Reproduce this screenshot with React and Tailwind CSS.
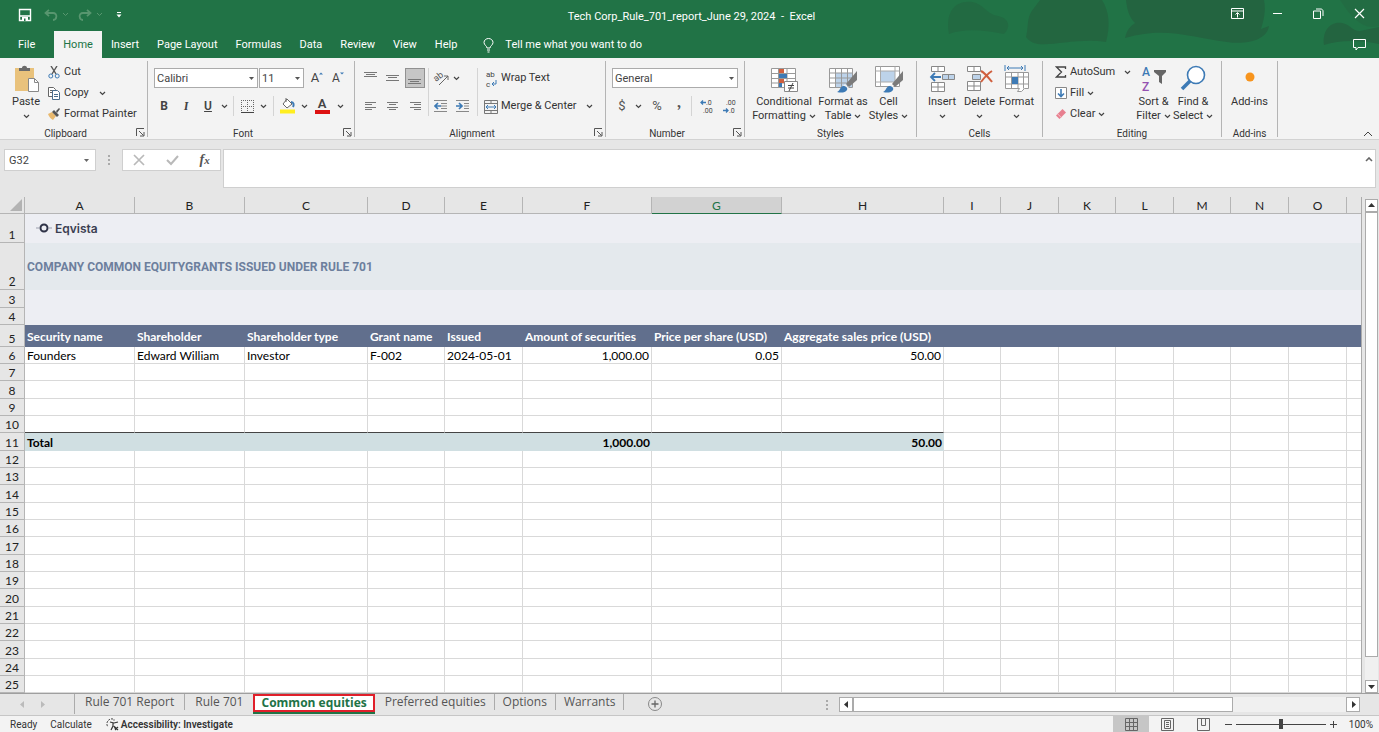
import clsx from "clsx";

const MENU_TABS = ['Insert', 'Page Layout', 'Formulas', 'Data', 'Review', 'View', 'Help'];

const COLUMNS = [
  { name: 'A', width: 'w-[110px]' },
  { name: 'B', width: 'w-[110px]' },
  { name: 'C', width: 'w-[123px]' },
  { name: 'D', width: 'w-[77px]' },
  { name: 'E', width: 'w-[78px]' },
  { name: 'F', width: 'w-[129px]' },
  { name: 'G', width: 'w-[130px]' },
  { name: 'H', width: 'w-[162px]' },
  { name: 'I', width: 'w-[57px]' },
  { name: 'J', width: 'w-[58px]' },
  { name: 'K', width: 'w-[57px]' },
  { name: 'L', width: 'w-[58px]' },
  { name: 'M', width: 'w-[57px]' },
  { name: 'N', width: 'w-[58px]' },
  { name: 'O', width: 'w-[58px]' },
  { name: '', width: '' },
];

const HEADINGS = ['Security name', 'Shareholder', 'Shareholder type', 'Grant name', 'Issued', 'Amount of securities', 'Price per share (USD)', 'Aggregate sales price (USD)'];
const GRANT = ['Founders', 'Edward William', 'Investor', 'F-002', '2024-05-01', '1,000.00', '0.05', '50.00'];
const TOTAL = ['Total', '', '', '', '', '1,000.00', '', '50.00'];

const Icon = ({ w = 16, h = 16, children, className }) => (
  <svg width={w} height={h} viewBox={`0 0 ${w} ${h}`} fill="none" stroke="#666" className={clsx('shrink-0', className)} aria-hidden="true">
    {children}
  </svg>
);

const Chevron = ({ className }) => (
  <Icon w={7} h={5} className={className}><path d="M1 1l2.5 2.5L6 1" stroke="#444" strokeWidth="1.2" /></Icon>
);

const Sep = () => <span className="w-px h-5 bg-[#d4d4d4] shrink-0" />;

const Tool = ({ label, className, children }) => (
  <button type="button" aria-label={label} className={clsx('flex h-5 items-center justify-center shrink-0', className)}>{children}</button>
);

const Group = ({ title, launcher, className, children }) => (
  <section aria-label={title} className={clsx('relative flex flex-col h-[76px] shrink-0 border-r border-[#b4b4b4]', className)}>
    <div className="h-16 shrink-0">{children}</div>
    <div className={clsx('text-center leading-[18px] text-[10px] text-[#333]', launcher && 'pr-4')}>{title}</div>
    {launcher && (
      <button type="button" aria-label={`${title} settings`} className="absolute right-[2px] bottom-0">
        <Icon w={9} h={9}><path d="M.5 8V.5H8M3 3l4.500 4.500M8 4v4H4" stroke="#555" /></Icon>
      </button>
    )}
  </section>
);

const BigButton = ({ icon, lines, chevron, className }) => (
  <button type="button" className={clsx('flex flex-col items-center pt-1 shrink-0 text-[11px] leading-[14px] whitespace-nowrap', className)}>
    <span className="flex h-[30px] items-start justify-center">{icon}</span>
    {lines.map((line, i) => (
      <span key={line} className="flex items-center gap-[3px]">
        {line}
        {chevron && i === 1 && <Chevron />}
      </span>
    ))}
    {chevron && lines.length === 1 && <span className="flex h-[14px] items-center"><Chevron /></span>}
  </button>
);

const Lines = ({ rows }) => (
  <Icon w={14} h={14}>
    {rows.map(([x, w, y]) => <path key={y} d={`M${x} ${y}.5h${w}`} stroke="#777" />)}
  </Icon>
);

const Brush = ({ x, y }) => (
  <g transform={`translate(${x} ${y})`} stroke="none">
    <path d="M20-2v9l-8 7-3-3z" fill="#7b7b7b" />
    <path d="M8 11l4 4-1 2-5-4z" fill="#f3f3f3" />
    <path d="M6 13c3 0 5 2 4 4-2 3-6 3-10 2 3-1 3-5 6-6z" fill="#3d7ab5" />
  </g>
);

const TitleArt = () => (
  <svg width="479" height="58" viewBox="0 0 479 58" className="absolute right-0 top-0" aria-hidden="true">
    <g fill="#236440">
      <path d="M49 34C45 12 55 0 72 2c12 2 14 12 26 14 10 2 14 10 6 18-20-4-40-6-55 0z" opacity=".6" />
      <path d="M126 37c3-12 0-20 8-29l6-8h62c8 12 8 28 4 42-26-4-52 4-68 2-6-1-10-4-12-7z" opacity=".85" />
      <path d="M226 0h138c2 10 0 20-3 29l8-3c-2 14-22 19-42 16-36-4-60-16-102-4 2-9 6-12 10-15-6-6-8-14-9-23z" />
      <path d="M424 45c-2-14 6-24 18-22 8 1 10 8 18 8l19-4v17c-18-4-40-4-55 1z" />
      <path d="M440 0h39v26c-16 4-26-6-39-26z" opacity=".45" />
    </g>
  </svg>
);

const TitleBar = () => (
  <header className="relative bg-[#217346] text-white text-[11px]">
    <TitleArt />
    <div className="relative flex h-[31px] items-center">
      <div className="flex flex-1 items-center pl-[18px] pb-[2px] gap-[7px]">
        <button type="button" aria-label="Save">
          <Icon w={14} h={14}><path d="M1.500 1.500h11v11h-11zM2 8h10" stroke="#fff" strokeWidth="1.400" /><path d="M4 9h6v4H4z" fill="#fff" stroke="none" /><path d="M6 10.500h1.500V13H6z" fill="#217346" stroke="none" /></Icon>
        </button>
        <button type="button" aria-label="Undo" className="flex items-center gap-1 ml-[5px]">
          <Icon w={14} h={12}><path d="M5 .8L1.500 4 5 7.200M2 4h7c5 0 4 7 0 7" stroke="#58966f" strokeWidth="1.800" /></Icon>
          <Icon w={7} h={5}><path d="M1 1l2.500 2.500L6 1" stroke="#58966f" /></Icon>
        </button>
        <button type="button" aria-label="Redo" className="flex items-center gap-1 ml-[2px]">
          <Icon w={14} h={12}><path d="M9 .8L12.500 4 9 7.200M12 4H5C0 4 1 11 5 11" stroke="#58966f" strokeWidth="1.800" /></Icon>
          <Icon w={7} h={5}><path d="M1 1l2.500 2.500L6 1" stroke="#58966f" /></Icon>
        </button>
        <button type="button" aria-label="Customize toolbar" className="ml-[6px]">
          <Icon w={6} h={6}><path d="M1 .5h4" stroke="#fff" /><path d="M.5 2.500h5L3 5.500z" fill="#fff" stroke="none" /></Icon>
        </button>
      </div>
      <h1 className="pt-[3px] whitespace-pre">Tech Corp_Rule_701_report_June 29, 2024  -  Excel</h1>
      <div className="flex flex-1 items-center justify-end gap-[28px] pr-[14px] pb-1">
        <button type="button" aria-label="Ribbon display options">
          <Icon w={13} h={11}><path d="M.5.5h12v10H.5zM.5 3h12M6.500 9.500V5M4.500 6.500l2-2 2 2" stroke="#fff" /></Icon>
        </button>
        <button type="button" aria-label="Minimize"><Icon w={11} h={11}><path d="M1 5.500h9" stroke="#fff" /></Icon></button>
        <button type="button" aria-label="Restore" className="ml-[2px]">
          <Icon w={11} h={11}><path d="M.5 3h7v7.500h-7zM3 1h5c1 0 2 1 2 2v5" stroke="#fff" /></Icon>
        </button>
        <button type="button" aria-label="Close" className="ml-[2px]"><Icon w={11} h={11}><path d="M1 1l9 9M10 1l-9 9" stroke="#fff" strokeWidth="1.200" /></Icon></button>
      </div>
    </div>
    <nav className="relative flex h-[27px] items-stretch pl-[9px]">
      <button type="button" className="px-[9px] pt-[2px] mr-[10px]">File</button>
      <button type="button" className="px-[9px] pt-[2px] bg-[#f3f3f3] text-[#217346]">Home</button>
      {MENU_TABS.map(tab => <button type="button" key={tab} className="px-[9px] pt-[2px]">{tab}</button>)}
      <button type="button" className="flex items-center gap-[10px] pt-px ml-[17px]">
        <Icon w={12} h={15}><path d="M4 10c0-2-3-3-3-5.500a4.500 4 0 0 1 9 0C10 7 7 8 7 10zM4 12h3M4.500 14h2" stroke="#fff" /></Icon>
        Tell me what you want to do
      </button>
      <button type="button" aria-label="Comments" className="ml-auto mr-[13px]">
        <Icon w={13} h={12}><path d="M.5.500h12v8H5L3 11V8.500H.5z" stroke="#fff" /></Icon>
      </button>
    </nav>
  </header>
);

const ClipboardGroup = () => (
  <Group title="Clipboard" launcher className="w-[148px]">
    <div className="flex pl-3 gap-2">
      <button type="button" className="flex flex-col items-center w-7 pt-1 text-[11px] leading-[14px]">
        <Icon w={26} h={30}>
          <path d="M2 3h19v23H2z" fill="#e9c27c" stroke="none" />
          <path d="M6 6V3h3c0-3 5-3 5 0h3v3z" fill="#6b6b6b" stroke="none" />
          <path d="M15.500 13.500h6l4 4v9h-10z" fill="#fff" stroke="#888" /><path d="M21.500 13.500v4h4" stroke="#888" />
        </Icon>
        Paste
        <span className="flex h-[14px] items-center"><Chevron /></span>
      </button>
      <div className="flex flex-col text-[11px]">
        <button type="button" className="flex h-[21px] items-center gap-1 pt-px">
          <Icon w={12} h={13}><path d="M3 0l5 8M9 0L4 8" stroke="#555" strokeWidth="1.400" /><circle cx="2.800" cy="10" r="2" stroke="#3d7ab5" /><circle cx="9.200" cy="10" r="2" stroke="#3d7ab5" /></Icon>
          Cut
        </button>
        <button type="button" className="flex h-[21px] items-center gap-1 pt-px">
          <Icon w={12} h={13}><path d="M.5.500h5l2 2v7h-7zM2 3.500h3M2 5.500h3" fill="#fff" /><path d="M4.500 3.500h5l2 2v7h-7zM6 7.500h4M6 9.500h4" fill="#fff" stroke="#4a6d8c" /></Icon>
          Copy
          <Chevron className="ml-[6px]" />
        </button>
        <button type="button" className="flex h-[21px] items-center gap-1 pt-px whitespace-nowrap">
          <Icon w={12} h={12}><path d="M0 6l4-2 4 4-3 4C3 11 1 9 0 6z" fill="#e9b96e" stroke="none" /><path d="M4 4l2-2 5 5-2 2zM8 3l3-3 1 1-3 4z" fill="#555" stroke="none" /></Icon>
          Format Painter
        </button>
      </div>
    </div>
  </Group>
);

const Dropdown = ({ label, value, className }) => (
  <div className={clsx('relative h-5', className)}>
    <select aria-label={label} className="block w-full h-full appearance-none border border-[#ababab] bg-white pl-[2px] text-[11px] leading-none text-[#444]">
      <option>{value}</option>
    </select>
    <Icon w={5} h={3} className="absolute right-1 top-[9px] pointer-events-none"><path d="M0 0h5L2.500 3z" fill="#555" stroke="none" /></Icon>
  </div>
);

const FontGroup = () => (
  <Group title="Font" launcher className="w-[207px]">
    <div className="flex flex-col gap-2 pt-[7px] pl-[6px]">
      <div className="flex items-center">
        <Dropdown label="Font" value="Calibri" className="w-[104px] mr-px" />
        <Dropdown label="Font size" value="11" className="w-[45px] mr-[3px]" />
        <Tool label="Grow font" className="w-5 text-[13px] text-[#444]">A<Icon w={4} h={12}><path d="M0 2.500L2 .5l2 2z" fill="#3d7ab5" stroke="none" /></Icon></Tool>
        <Tool label="Shrink font" className="w-[22px] text-[12px] text-[#444]">A<Icon w={4} h={12}><path d="M0 .5h4l-2 2z" fill="#3d7ab5" stroke="none" /></Icon></Tool>
      </div>
      <div className="flex items-center text-[12px] text-[#444]">
        <Tool className="w-5 font-bold">B</Tool>
        <Tool className="w-6 italic font-serif font-bold">I</Tool>
        <Tool className="w-5 underline font-semibold">U</Tool>
        <Tool label="Underline styles" className="w-3"><Chevron /></Tool>
        <span className="w-[3px]" /><Sep /><span className="w-[3px]" />
        <Tool label="Borders" className="w-5"><Icon w={13} h={13}><path d="M.5 0v12M6.500 0v12M12.500 0v12M0 .5h13M0 6.500h13" strokeDasharray="1 1" /><path d="M0 12.500h13" stroke="#444" /></Icon></Tool>
        <Tool label="Border styles" className="w-3"><Chevron /></Tool>
        <span className="w-[4px]" /><Sep /><span className="w-[4px]" />
        <Tool label="Fill color" className="w-5">
          <Icon w={16} h={16}><path d="M7 1l5 5-5 4-4-4zM6 4V0" stroke="#666" fill="#fff" /><path d="M11 4c3 0 3 3 2 5" stroke="#3d7ab5" strokeWidth="2" /><path d="M0 11.500h15v4H0z" fill="#ffee1f" stroke="none" /></Icon>
        </Tool>
        <Tool label="Fill colors" className="w-3"><Chevron /></Tool>
        <Tool label="Font color" className="w-6">
          <span className="flex flex-col items-center"><span className="leading-[12px] text-[13px] font-semibold">A</span><span className="w-[15px] h-1 bg-[#dd1111]" /></span>
        </Tool>
        <Tool label="Font colors" className="w-3"><Chevron /></Tool>
      </div>
    </div>
  </Group>
);

const AlignmentGroup = () => (
  <Group title="Alignment" launcher className="w-[251px]">
    <div className="flex pt-[7px] pl-[6px]">
      <div className="grid grid-cols-3 gap-x-[2px] gap-y-2 pr-[3px] shrink-0">
        <Tool label="Top align" className="w-5"><Lines rows={[[0, 13, 1], [2, 9, 3], [0, 13, 5]]} /></Tool>
        <Tool label="Middle align" className="w-5"><Lines rows={[[0, 13, 4], [2, 9, 6], [0, 13, 9]]} /></Tool>
        <Tool label="Bottom align" className="w-5 border border-[#919191] bg-[#c6c6c6]"><Lines rows={[[0, 13, 8], [2, 9, 10], [0, 13, 12]]} /></Tool>
        <Tool label="Align left" className="w-5"><Lines rows={[[1, 11, 3], [1, 7, 5], [1, 11, 8], [1, 7, 10]]} /></Tool>
        <Tool label="Center" className="w-5"><Lines rows={[[1, 11, 3], [3, 7, 5], [1, 11, 8], [3, 7, 10]]} /></Tool>
        <Tool label="Align right" className="w-5"><Lines rows={[[2, 11, 3], [6, 7, 5], [2, 11, 8], [6, 7, 10]]} /></Tool>
      </div>
      <div className="flex flex-col gap-2 w-[50px] shrink-0 border-x border-[#d4d4d4] pl-[2px]">
        <div className="flex items-center gap-[2px]">
          <Tool label="Orientation" className="w-5">
            <svg width="16" height="16" viewBox="0 0 16 16" className="overflow-visible" aria-hidden="true"><text x="1" y="10" fontSize="9" fill="#555" transform="rotate(-38 5 8)">ab</text><path d="M6 15l9-9M11 6h4v4" stroke="#666" fill="none" /></svg>
          </Tool>
          <Chevron />
        </div>
        <div className="flex items-center gap-[2px]">
          <Tool label="Decrease indent" className="w-5"><Icon w={14} h={12}><path d="M0 .5h13M7 3.500h6M7 6h6M7 8.500h6M0 11.500h13" stroke="#888" /><path d="M7 6H1M4 3L1 6l3 3" stroke="#3d7ab5" strokeWidth="1.700" /></Icon></Tool>
          <Tool label="Increase indent" className="w-5"><Icon w={14} h={12}><path d="M0 .5h13M8 3.500h5M8 6h5M8 8.500h5M0 11.500h13" stroke="#888" /><path d="M0 6h6M3 3l3 3-3 3" stroke="#3d7ab5" strokeWidth="1.700" /></Icon></Tool>
        </div>
      </div>
      <div className="flex flex-col gap-2 pl-[6px] text-[11px] whitespace-nowrap">
        <button type="button" className="flex h-5 items-center gap-[3px] pt-px">
          <svg width="14" height="18" viewBox="0 0 14 18" className="overflow-visible" aria-hidden="true"><text x="2" y="7" fontSize="8" fill="#444">ab</text><text x="2" y="17" fontSize="8" fill="#444">c</text><path d="M12 10v4H8M10 12l-2 2 2 2" stroke="#3d7ab5" fill="none" /></svg>
          Wrap Text
        </button>
        <button type="button" className="flex h-5 items-center gap-[3px] pt-px">
          <Icon w={14} h={14}><path d="M.5.500h13v13H.5zM.5 3.500h13M.5 10.500h13M7 0v3.500M7 10.500V14" stroke="#777" /><path d="M2 7h10M4 5L2 7l2 2M10 5l2 2-2 2" stroke="#3d7ab5" /></Icon>
          Merge &amp; Center
          <Chevron className="ml-[6px]" />
        </button>
      </div>
    </div>
  </Group>
);

const DecimalIcon = ({ increase }) => (
  <svg width="14" height="14" viewBox="0 0 14 14" className="overflow-visible" aria-hidden="true" fontSize="7" fill="#444">
    <text x={increase ? 6 : 4} y="6">{increase ? '.0' : '.00'}</text>
    <text x={increase ? 3 : 7} y="14">{increase ? '.00' : '.0'}</text>
    <path d={increase ? 'M6 3.500H1M3 1.500l-2 2 2 2' : 'M1 11.500h5M4 9.500l2 2-2 2'} stroke="#3d7ab5" strokeWidth="1.300" fill="none" />
  </svg>
);

const NumberGroup = () => (
  <Group title="Number" launcher className="w-[139px]">
    <div className="flex flex-col gap-2 pt-[7px] pl-[6px]">
      <Dropdown label="Number format" value="General" className="w-[126px]" />
      <div className="flex items-center text-[13px] text-[#555]">
        <Tool className="w-5">$</Tool>
        <Tool label="Currency formats" className="w-3"><Chevron /></Tool>
        <Tool className="w-[26px]">%</Tool>
        <Tool className="w-[18px] pb-2 font-bold font-serif text-[18px]">,</Tool>
        <span className="w-[3px] shrink-0" /><Sep /><span className="w-[4px] shrink-0" />
        <Tool label="Increase decimal" className="w-[22px]"><DecimalIcon increase /></Tool>
        <Tool label="Decrease decimal" className="w-[22px]"><DecimalIcon /></Tool>
      </div>
    </div>
  </Group>
);

const StylesGroup = () => (
  <Group title="Styles" className="w-[172px]">
    <div className="flex pl-[6px]">
      <BigButton className="w-[66px]" chevron lines={['Conditional', 'Formatting']} icon={
        <Icon w={28} h={28}>
          <path d="M1.500 3.500h24v19h-24zM1.500 8.500h24M1.500 13.500h24M1.500 18h24M8.500 3.500v19M17 3.500v19" fill="#fff" stroke="#999" />
          <path d="M9 4h5v4H9zM9 14h5v4H9z" fill="#d0603f" stroke="none" /><path d="M9 9h8v4H9zM9 18h3v4H9z" fill="#3d7ab5" stroke="none" />
          <path d="M14.500 16.500h13v10h-13z" fill="#fff" stroke="#888" /><path d="M18 20.500h6M18 23h6M23 18l-4 8" stroke="#444" />
        </Icon>
      } />
      <BigButton className="w-[52px]" chevron lines={['Format as', 'Table']} icon={
        <Icon w={28} h={28}>
          <path d="M.5 3.500h23v19H.5z" fill="#fff" stroke="#999" /><path d="M7 8h16v14H7z" fill="#bdd3ea" stroke="none" />
          <path d="M.5 8h23M.5 13h23M.5 18h23M6.500 3.500v19M12.500 3.500v19M18.500 3.500v19" stroke="#999" />
          <Brush x={8} y={8} />
        </Icon>
      } />
      <BigButton className="w-[39px]" chevron lines={['Cell', 'Styles']} icon={
        <Icon w={28} h={28}>
          <path d="M.5 1.500h24v20H.5z" fill="#fff" stroke="#999" /><path d="M6 6h14v11H6z" fill="#bdd3ea" stroke="none" />
          <path d="M.5 6h24M.5 17h24M5.500 1.500v20M20 1.500v20" stroke="#aaa" />
          <Brush x={8} y={8} />
        </Icon>
      } />
    </div>
  </Group>
);

const CellsGroup = () => (
  <Group title="Cells" className="w-[126px]">
    <div className="flex pl-[6px]">
      <BigButton className="w-[38px]" chevron lines={['Insert']} icon={
        <Icon w={26} h={28}>
          <path d="M2.500 1.500h13v5h-13zM9 1.500v5M2.500 17.500h13v9h-13zM2.500 22h13M9 17.500v9" fill="#fff" stroke="#888" />
          <path d="M13.500 9.500h12v5h-12zM19.500 9.500v5" fill="#bdd3ea" stroke="#888" /><path d="M12 12H2M6 8l-4 4 4 4" stroke="#3d7ab5" strokeWidth="1.800" />
        </Icon>
      } />
      <BigButton className="w-[37px]" chevron lines={['Delete']} icon={
        <Icon w={26} h={28}>
          <path d="M.5 1.500h13v5H.5zM7 1.500v5M.5 16.500h13v9H.5zM.5 21h13M7 16.500v9" fill="#fff" stroke="#888" />
          <path d="M5.500 9.500h8v5h-8z" fill="#bdd3ea" stroke="#888" /><path d="M14 6c4 2 7 6 11 11M25 6c-5 3-8 7-11 11" stroke="#d0603f" strokeWidth="2" />
        </Icon>
      } />
      <BigButton className="w-[37px]" chevron lines={['Format']} icon={
        <Icon w={26} h={28}>
          <path d="M1 0v6M21 0v6M3 3h16M5 1L3 3l2 2M17 1l2 2-2 2" stroke="#3d7ab5" />
          <path d="M1.500 7.500h23v16h-4l-3 3h-4l2-3h-14zM1.500 12h23M1.500 19h23M7.500 7.500v16M14 7.500v16M19.500 7.500v16" fill="#fff" stroke="#999" />
          <path d="M8 12h6v7H8z" fill="#3d7ab5" stroke="none" />
        </Icon>
      } />
    </div>
  </Group>
);

const EditingGroup = () => (
  <Group title="Editing" className="w-[179px]">
    <div className="flex pl-3">
      <div className="flex flex-col w-[79px] text-[11px]">
        <button type="button" className="flex h-[21px] items-center gap-[3px] pt-px">
          <Icon w={12} h={12}><path d="M10.500 3V1H1.500l5 5-5 5h9V9" stroke="#444" strokeWidth="1.300" /></Icon>
          AutoSum
          <Chevron className="ml-[6px]" />
        </button>
        <button type="button" className="flex h-[21px] items-center gap-[3px] pt-px">
          <Icon w={12} h={12}><path d="M.5.500h11v11H.5z" fill="#fff" stroke="#888" /><path d="M6 2v7M3 6.500l3 3 3-3" stroke="#3d7ab5" strokeWidth="1.600" /></Icon>
          Fill
          <Chevron />
        </button>
        <button type="button" className="flex h-[21px] items-center gap-[3px] pt-px">
          <Icon w={12} h={12}><path d="M7.500 1L11 4.500 4.500 11 1 7.500z" fill="#e77f8f" stroke="none" /><path d="M2.500 5.800l3.800 3.800" stroke="#f7c5cc" /></Icon>
          Clear
          <Chevron />
        </button>
      </div>
      <BigButton className="w-[39px]" chevron lines={['Sort &', 'Filter']} icon={
        <svg width="26" height="28" viewBox="0 0 26 28" className="overflow-visible" aria-hidden="true" fontSize="12" fontWeight="500"><text x="1" y="11" fill="#3d7ab5">A</text><text x="1" y="26" fill="#9351b0">Z</text><path d="M13 5h12v2l-4 4v8l-3-2v-6l-5-4z" fill="#666" /></svg>
      } />
      <BigButton className="w-[40px]" chevron lines={['Find &', 'Select']} icon={
        <Icon w={26} h={28}><circle cx="16" cy="10" r="8.500" fill="#fff" stroke="#3d7ab5" strokeWidth="1.600" /><path d="M10 16l-8 8" stroke="#3d7ab5" strokeWidth="3.500" /></Icon>
      } />
    </div>
  </Group>
);

const Ribbon = () => (
  <div className="flex h-[82px] pt-[3px] bg-[#f3f3f3] border-b border-[#d2d2d2] text-[#333]">
    <ClipboardGroup />
    <FontGroup />
    <AlignmentGroup />
    <NumberGroup />
    <StylesGroup />
    <CellsGroup />
    <EditingGroup />
    <Group title="Add-ins" className="w-[56px]">
      <BigButton className="w-full" lines={['Add-ins']} icon={<Icon w={12} h={26}><circle cx="6" cy="12" r="4.500" fill="#f7941d" stroke="none" /></Icon>} />
    </Group>
    <button type="button" aria-label="Collapse ribbon" className="self-end ml-auto mr-[6px] mb-[2px]">
      <Icon w={10} h={6}><path d="M1 5l4-4 4 4" stroke="#444" /></Icon>
    </button>
  </div>
);

const FormulaBar = () => (
  <div className="flex items-start h-[57px] shrink-0 pt-[9px] pl-1 pr-[3px] bg-[#e6e6e6] text-[11px]">
    <div className="relative w-[92px] h-[22px]">
      <input aria-label="Name box" defaultValue="G32" className="w-full h-full bg-white border border-[#cfcfcf] pl-1 text-[#444]" />
      <Icon w={5} h={3} className="absolute right-[7px] top-[10px]"><path d="M0 0h5L2.500 3z" fill="#666" stroke="none" /></Icon>
    </div>
    <Icon w={2} h={22} className="mx-3"><path d="M1 6v2M1 10v2M1 14v2" stroke="#aaa" strokeWidth="2" /></Icon>
    <div className="flex w-[99px] h-[22px] items-center justify-around bg-white border border-[#cfcfcf]">
      <button type="button" aria-label="Cancel"><Icon w={12} h={12}><path d="M1 1l10 10M11 1L1 11" stroke="#b9b9b9" strokeWidth="1.700" /></Icon></button>
      <button type="button" aria-label="Enter"><Icon w={13} h={12}><path d="M1 6l4 4 7-8" stroke="#b9b9b9" strokeWidth="2" /></Icon></button>
      <button type="button" className="font-['Liberation_Serif',serif] italic font-bold text-[14px] leading-none text-[#555]">f<span className="text-[11px]">x</span></button>
    </div>
    <div className="relative flex-1 h-[39px] ml-[2px]">
      <textarea aria-label="Formula bar" className="block w-full h-full resize-none bg-white border border-[#cfcfcf]" />
      <button type="button" aria-label="Collapse formula bar" className="absolute right-[3px] top-2">
        <Icon w={8} h={5} className="block"><path d="M1 4l3-3 3 3" stroke="#666" strokeWidth="1.600" /></Icon>
      </button>
    </div>
  </div>
);

const RowHead = ({ n }) => (
  <th scope="row" className="p-0 align-bottom font-normal text-center text-[12px] leading-[14px] bg-[#e6e6e6] border-r border-b border-[#b5b5b5] text-[#222]">{n}</th>
);

const cell = 'p-0 px-[2px] pt-px whitespace-nowrap';
const gridCell = 'border-r last:border-r-0 border-b border-[#d9d9d9]';

const EmptyRow = ({ n }) => (
  <tr className={n % 3 === 2 ? 'h-[18px]' : 'h-[17px]'}>
    <RowHead n={n} />
    {COLUMNS.map(c => <td key={c.name} className={gridCell} />)}
  </tr>
);

const BandRow = ({ n, className, children }) => (
  <tr className={className}>
    <RowHead n={n} />
    <td colSpan={16} className={cell}>{children}</td>
  </tr>
);

const Sheet = () => (
  <table className="w-full table-fixed border-separate border-spacing-0 font-['Lato','Liberation_Sans',sans-serif] text-[12px] leading-[15px] text-black bg-white">
    <colgroup>
      <col className="w-[25px]" />
      {COLUMNS.map(c => <col key={c.name} className={c.width} />)}
    </colgroup>
    <thead>
      <tr className="h-[17px] bg-[#e6e6e6]">
        <th className="p-0 border-r border-b border-[#b5b5b5]">
          <Icon w={12} h={12} className="ml-auto mr-[2px]"><path d="M12 0v12H0z" fill="#b3b3b3" stroke="none" /></Icon>
        </th>
        {COLUMNS.map(c => (
          <th key={c.name} scope="col" className={clsx('p-0 pt-px font-normal border-r last:border-r-0 border-b', c.name === 'G' ? 'bg-[#d2d2d2] text-[#217346] border-r-[#b5b5b5] border-b-[#217346]' : 'border-[#b5b5b5] text-[#222]')}>{c.name}</th>
        ))}
      </tr>
    </thead>
    <tbody>
      <BandRow n={1} className="h-[29px] bg-[#edeef3]">
        <span className="flex items-center gap-[3px] pl-[9px] pb-[2px] font-['Inter',sans-serif] text-[12px] font-semibold text-[#3b3f52]">
          <Icon w={16} h={10}><path d="M0 5h3M13 5h3" stroke="#b5b8c4" strokeWidth="1.500" /><circle cx="8" cy="5" r="3.500" stroke="#2f3347" strokeWidth="2" /></Icon>
          Eqvista
        </span>
      </BandRow>
      <BandRow n={2} className="h-[47px] bg-[#e4e9ed] font-['Roboto',sans-serif] font-bold text-[#6d7f9d]">COMPANY COMMON EQUITYGRANTS ISSUED UNDER RULE 701</BandRow>
      <BandRow n={3} className="h-[18px] bg-[#edeef3]" />
      <BandRow n={4} className="h-[17px] bg-[#edeef3]" />
      <tr className="h-[22px] bg-[#616f8d] text-white">
        <RowHead n={5} />
        {COLUMNS.map((c, i) => <th key={c.name} scope="col" className={clsx(cell, 'text-left font-bold')}>{HEADINGS[i]}</th>)}
      </tr>
      <tr className="h-[17px]">
        <RowHead n={6} />
        {COLUMNS.map((c, i) => <td key={c.name} className={clsx(cell, gridCell, i > 4 && 'text-right')}>{GRANT[i]}</td>)}
      </tr>
      {[7, 8, 9].map(n => <EmptyRow key={n} n={n} />)}
      <tr className="h-[17px]">
        <RowHead n={10} />
        {COLUMNS.map((c, i) => <td key={c.name} className={clsx(gridCell, i < 8 && 'border-b-[#444]')} />)}
      </tr>
      <tr className="h-[18px]">
        <RowHead n={11} />
        {COLUMNS.map((c, i) => (
          <td key={c.name} className={clsx(cell, i < 8 ? 'bg-[#d0dfe2] font-bold' : gridCell, i > 4 && 'text-right')}>{TOTAL[i]}</td>
        ))}
      </tr>
      {[12, 13, 14, 15, 16, 17, 18, 19, 20, 21, 22, 23, 24, 25].map(n => <EmptyRow key={n} n={n} />)}
    </tbody>
  </table>
);

const Arrow = ({ d, fill = '#333' }) => <Icon w={7} h={7}><path d={d} fill={fill} stroke="none" /></Icon>;

const VerticalScroll = () => (
  <div className="flex flex-col w-[17px] shrink-0 pt-[2px] pl-[3px] pr-px bg-[#e6e6e6]">
    <button type="button" aria-label="Scroll up" className="flex h-[13px] items-center justify-center border border-[#ababab] bg-white"><Arrow d="M0 5l3.500-4L7 5z" /></button>
    <div className="flex-1 bg-[#f0f0f0]"><div className="h-[95%] border border-[#ababab] bg-white" /></div>
    <button type="button" aria-label="Scroll down" className="flex h-[13px] items-center justify-center border border-[#ababab] bg-white"><Arrow d="M0 2h7L3.500 6z" /></button>
  </div>
);

const SheetTab = ({ className, children }) => (
  <button type="button" className={clsx('h-4 whitespace-nowrap border-[#ababab]', className)}>{children}</button>
);

const SheetTabs = () => (
  <div className="flex h-[22px] shrink-0 items-start bg-[#e6e6e6] border-t border-[#9f9f9f] font-['Open_Sans','Liberation_Sans',sans-serif] text-[12px] leading-4 text-[#555]">
    <div className="flex w-[75px] h-5 items-center pl-[19px] gap-[14px] border-r border-[#ababab]">
      <button type="button" aria-label="Previous sheet"><Arrow d="M5 0v7L1 3.500z" fill="#bbb" /></button>
      <button type="button" aria-label="Next sheet"><Arrow d="M1 0v7l4-3.500z" fill="#bbb" /></button>
    </div>
    <SheetTab className="px-[10px] border-r">Rule 701 Report</SheetTab>
    <SheetTab className="px-[10px]">Rule 701</SheetTab>
    <button type="button" className="h-5 border-b-2 border-[#217346]">
      <span className="block h-[18px] border-2 border-[#e0202b] bg-white px-[6px] leading-[14px] font-bold text-[#217346] whitespace-nowrap">Common equities</span>
    </button>
    <SheetTab className="pl-[10px] pr-2 border-r">Preferred equities</SheetTab>
    <SheetTab className="px-2 border-r">Options</SheetTab>
    <SheetTab className="px-2 border-r">Warrants</SheetTab>
    <button type="button" aria-label="New sheet" className="ml-6 mt-[3px]">
      <Icon w={14} h={14}><circle cx="7" cy="7" r="6.500" stroke="#888" /><path d="M7 3.500v7M3.500 7h7" stroke="#666" strokeWidth="1.300" /></Icon>
    </button>
    <div className="flex w-[553px] ml-auto pt-[3px] pr-[19px] items-center">
      <Icon w={2} h={12} className="mr-[11px]"><path d="M1 1v2M1 5v2M1 9v2" stroke="#aaa" strokeWidth="2" /></Icon>
      <button type="button" aria-label="Scroll left" className="flex w-[14px] h-[15px] items-center justify-center border border-[#ababab] bg-white"><Arrow d="M5 0v7L1 3.500z" /></button>
      <div className="flex-1 h-[15px] bg-[#f0f0f0]"><div className="w-[77%] h-full border border-[#ababab] bg-white" /></div>
      <button type="button" aria-label="Scroll right" className="flex w-[14px] h-[15px] items-center justify-center border border-[#ababab] bg-white"><Arrow d="M2 0v7l4-3.500z" /></button>
    </div>
  </div>
);

const StatusBar = () => (
  <footer className="flex h-[18px] shrink-0 items-center pl-[10px] bg-[#f3f3f3] border-t border-[#c6c6c6] text-[10px] text-[#333]">
    <span>Ready</span>
    <span className="ml-[13px]">Calculate</span>
    <button type="button" className="flex items-center gap-[2px] ml-[14px] font-semibold">
      <Icon w={13} h={13}><path d="M7 1a5 5 0 0 0-5 8" strokeDasharray="2 1" stroke="#444" /><path d="M4 4l4 1 4-1M7 5v3l-2 4M8 8l2 4M8 1.500v1M9 9l3 3M12 9l-3 3" stroke="#333" strokeWidth="1.200" /></Icon>
      Accessibility: Investigate
    </button>
    <div className="flex items-center ml-auto pr-[6px]">
      <button type="button" aria-label="Normal view" className="flex w-9 h-[17px] items-center justify-center bg-[#c6c6c6]"><Icon w={13} h={13}><path d="M.5.500h12v12H.5zM.5 4.500h12M.5 8.500h12M4.500.500v12M8.500.500v12" /></Icon></button>
      <button type="button" aria-label="Page layout view" className="flex w-9 h-[17px] items-center justify-center"><Icon w={13} h={13}><path d="M.5.500h12v12H.5zM3.500 2.500h6v8h-6zM5 4.500h3M5 6.500h3M5 8.500h3" /></Icon></button>
      <button type="button" aria-label="Page break view" className="flex w-9 h-[17px] items-center justify-center"><Icon w={13} h={13}><path d="M.5.500h12v12H.5zM4.500.500v7h4v-7" /></Icon></button>
      <button type="button" aria-label="Zoom out" className="mx-[4px]"><Icon w={7} h={7}><path d="M0 3.500h7" stroke="#444" /></Icon></button>
      <input type="range" aria-label="Zoom" className="w-[90px] h-3 appearance-none bg-transparent [&::-webkit-slider-runnable-track]:h-px [&::-webkit-slider-runnable-track]:bg-[#444] [&::-webkit-slider-thumb]:appearance-none [&::-webkit-slider-thumb]:w-1 [&::-webkit-slider-thumb]:h-[10px] [&::-webkit-slider-thumb]:-mt-[5px] [&::-webkit-slider-thumb]:bg-[#444]" />
      <button type="button" aria-label="Zoom in" className="ml-1 mr-2"><Icon w={7} h={7}><path d="M0 3.500h7M3.500 0v7" stroke="#444" /></Icon></button>
      <span className="w-7 text-right">100%</span>
    </div>
  </footer>
);

export default function App() {
  return (
    <div className="flex flex-col min-h-screen bg-[#e6e6e6] font-['Roboto','Liberation_Sans',sans-serif]">
      <TitleBar />
      <Ribbon />
      <FormulaBar />
      <main className="flex flex-1">
        <div className="flex-1 min-w-0 border-r border-[#ababab]"><Sheet /></div>
        <VerticalScroll />
      </main>
      <SheetTabs />
      <StatusBar />
    </div>
  );
}
